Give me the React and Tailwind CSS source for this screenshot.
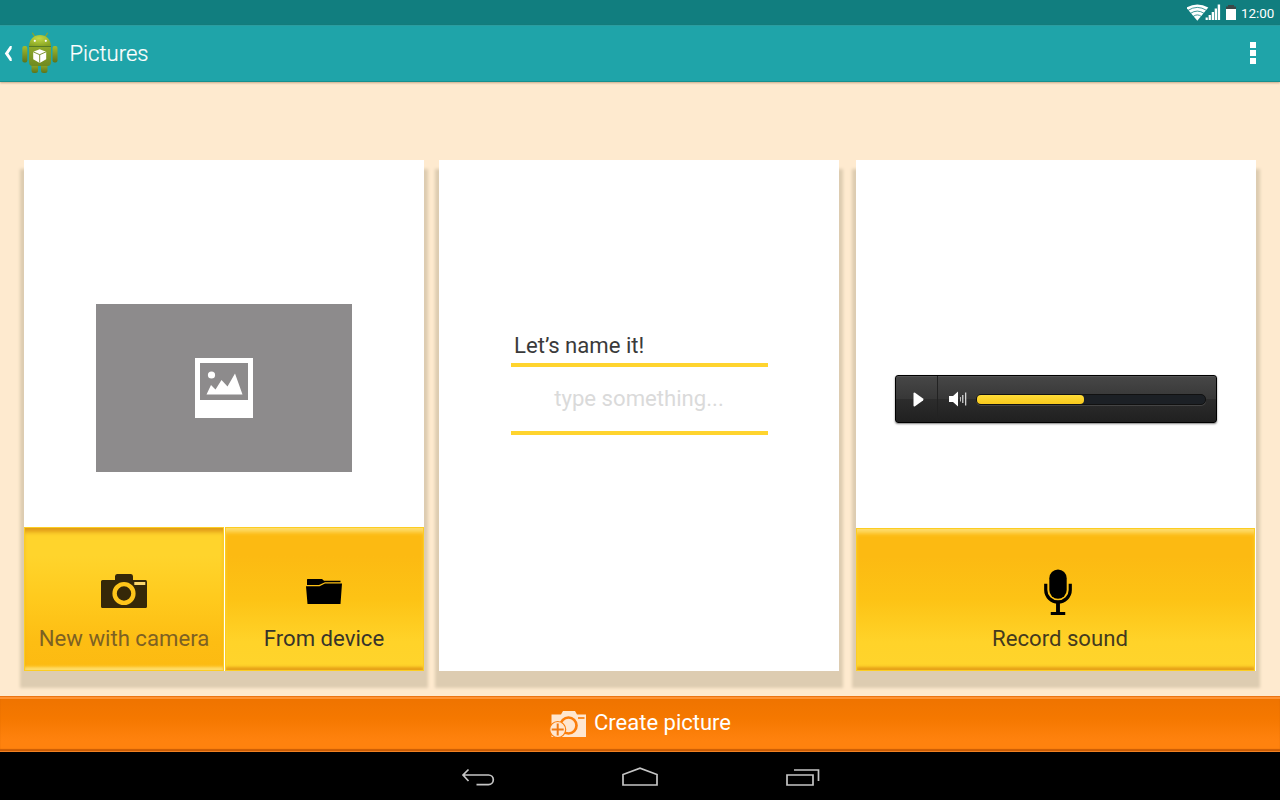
import React from 'react';

function StatusBar() {
  return (
    <div className="flex h-[25px] shrink-0 items-center justify-end bg-[#117e7f] pr-[5px]">
      <svg width="50" height="25" viewBox="0 0 50 25" className="mr-[4px]">
        <path d="M10 20.8 L-1 7.6 Q10 1.400 21 7.600 Z" transform="translate(.3 0)" fill="#fff" />
        <g fill="none" stroke="#117e7f" strokeWidth=".8">
          <path d="M1 10.4 Q10.3 4.400 19.6 10.4" />
          <path d="M3.4 13.4 Q10.3 8.8 17.2 13.4" />
          <path d="M6 16.6 Q10.3 13.2 14.6 16.6" />
        </g>
        <path d="M18.6 17.500h2.200v2.500h-2.200zM21.600 15h2.300V20h-2.300zM24.700 12h2.300v8h-2.300zM27.700 8.500h2.300V20h-2.300zM30.700 4.400h2.400V20h-2.400z" fill="#fff" />
        <path d="M41 5h6v1.500h2V9H39V6.500h2z" fill="#3c4747" />
        <path d="M39 9h10v11H39z" fill="#fff" />
      </svg>
      <span className="mt-[2px] w-[34px] whitespace-nowrap text-[13.400px] leading-[23px] text-white">12:00</span>
    </div>
  );
}

function AndroidIcon() {
  return (
    <svg width="36" height="42" viewBox="0 0 36 42">
      <defs>
        <linearGradient id="limb" x1="0" x2="0" y1="0" y2="1">
          <stop offset="0" stopColor="#a3bd2d" />
          <stop offset="1" stopColor="#5c741a" />
        </linearGradient>
        <linearGradient id="torso" x1="0" x2="0" y1="0" y2="1">
          <stop offset="0" stopColor="#8fa92a" />
          <stop offset="1" stopColor="#6f8a20" />
        </linearGradient>
        <radialGradient id="head" cx=".45" cy=".3" r=".75">
          <stop offset="0" stopColor="#c3d944" />
          <stop offset="1" stopColor="#87a323" />
        </radialGradient>
      </defs>
      <path d="M10.5 1.200l3 4.500M25.500 1.200l-3 4.500" stroke="#8ca62b" strokeWidth="1.200" strokeLinecap="round" />
      <g fill="url(#limb)">
        <rect x=".3" y="14" width="5" height="16.500" rx="2" />
        <rect x="30.500" y="14" width="5" height="16.500" rx="2" />
        <rect x="9.500" y="30" width="6.500" height="11" rx="2.500" />
        <rect x="19" y="30" width="6.500" height="11" rx="2.500" />
      </g>
      <path d="M7 14.500h22V30q0 4-3.500 4h-15Q7 34 7 30z" fill="url(#torso)" />
      <path d="M7 14C7.500 7 11.500 3 18 3s10.500 4 11 11z" fill="url(#head)" />
      <path d="M7 14.500h22" stroke="#556f18" strokeWidth=".8" />
      <circle cx="12.800" cy="8.800" r="1.100" fill="#fff" />
      <circle cx="23.800" cy="8.800" r="1.100" fill="#fff" />
      <path d="M17.700 17.300l6.500 2.400v7.600l-6.500 3.600-6.500-3.600v-7.600z" fill="#fff" />
      <path d="M11.200 19.800l6.500 2.900 6.500-2.900M17.700 22.700v8" fill="none" stroke="#71881e" strokeWidth=".9" />
    </svg>
  );
}

function ActionBar() {
  return (
    <header className="z-10 flex h-[57px] shrink-0 items-center border-b border-[#16908f] bg-[#1fa4a9] shadow-[0_1px_2px_rgba(120,70,30,0.4),inset_0_1px_0_#2b9da0]">
      <svg width="8" height="16" viewBox="0 0 8 16" className="ml-[4px] mt-px">
        <path d="M6 0H7.800L7.600 2.800 4.400 7.500 7.600 12.200 7.800 15H6L.8 7.500z" fill="#fff" />
      </svg>
      <div className="ml-[10px]">
        <AndroidIcon />
      </div>
      <h1 className="ml-[11.500px] text-[22.100px] font-light leading-[56px] text-white [-webkit-text-stroke:0.2px_white]">Pictures</h1>
      <div className="ml-auto mr-[24px] flex flex-col gap-[2px]">
        <i className="size-[6px] bg-white" />
        <i className="size-[6px] bg-white" />
        <i className="size-[6px] bg-white" />
      </div>
    </header>
  );
}

function Card({ className = '', children }) {
  return (
    <section className={`flex h-[511px] w-[400px] flex-col bg-white shadow-[0_13px_3px_4px_#ddccb1] ${className}`}>
      {children}
    </section>
  );
}

const raised =
  'bg-[linear-gradient(#fcba12_0%,#fcba12_20%,#fdc315_50%,#ffd329_80%,#ffd42c_100%)] shadow-[inset_0_0_0_1px_#fccd22,inset_0_6px_4px_-1px_#fedd6c,inset_0_-5px_3px_-1px_#e6a118]';
const pressed =
  'bg-[linear-gradient(#ffd42c_0%,#ffd42c_20%,#ffca1d_50%,#fdbd13_80%,#fcba12_100%)] shadow-[inset_0_0_0_1px_#fccd22,inset_0_6px_4px_-1px_#e09b18,inset_0_-5px_3px_-1px_#fedd6c]';

function TileButton({ className, iconClass, label, labelClass, children }) {
  return (
    <button className={`flex flex-col items-center ${className}`}>
      <span className={`flex h-[50px] shrink-0 items-center justify-center ${iconClass}`}>{children}</span>
      <span className={`whitespace-nowrap text-[22.150px] leading-[30px] ${labelClass}`}>{label}</span>
    </button>
  );
}

function PictureCard() {
  return (
    <Card>
      <div className="ml-[72px] mt-[144px] flex h-[168px] w-[256px] items-center justify-center bg-[#8d8b8c]">
        <svg width="58" height="60" viewBox="0 0 58 60">
          <path fillRule="evenodd" d="M0 0h58v60H0zM5 5v37h48V5z" fill="#fff" />
          <circle cx="16.500" cy="17" r="3.600" fill="#fff" />
          <path d="M11.500 36.500L16 27l4.500 4.500 6-9.500 6 6.500 7.500-13 7.500 21z" fill="#fff" />
        </svg>
      </div>
      <div className="mt-auto flex h-[144px] gap-px">
        <TileButton className={`w-[200px] ${pressed}`} iconClass="mt-[39px]" label="New with camera" labelClass="mt-[7px] text-[#7d6123]">
          <svg width="46" height="34" viewBox="0 0 46 34">
            <path d="M1.500 6H14V2.500Q14 0 16 0h14q2 0 2 2.500V6h12.500Q46 6 46 8v24.500q0 1.500-1.500 1.500h-43Q0 34 0 32.500v-25Q0 6 1.500 6z" fill="#352808" />
            <circle cx="23" cy="19.500" r="9.400" fill="#352808" stroke="#fec51a" strokeWidth="4.400" />
            <path d="M33.300 8h11v3h-11z" fill="#fbd76c" />
          </svg>
        </TileButton>
        <TileButton className={`w-[199px] ${raised}`} iconClass="mt-[39px] pr-px" label="From device" labelClass="mt-[7px] pr-px text-[#38342a]">
          <svg width="36" height="25" viewBox="0 0 36 25">
            <path d="M1 .2Q1 0 2 0h14l2 1.700h16.500v1.500H19L13 6H1z" />
            <path d="M0 7.300h13.500L19 4.500h17L34.500 25h-33z" />
          </svg>
        </TileButton>
      </div>
    </Card>
  );
}

function NameCard() {
  return (
    <Card className="ml-[15px]">
      <div className="ml-[72px] mt-[168px] flex w-[257px] flex-col">
        <label className="pl-[3px] text-[22.150px] leading-[35px] text-[#3a3a3a]">Let’s name it!</label>
        <div className="flex h-[72px] items-center justify-center border-y-4 border-[#ffd42e] text-[22.150px] text-[#dadada]">
          <span className="pr-px">type something...</span>
        </div>
      </div>
    </Card>
  );
}

function AudioPlayer() {
  return (
    <div className="ml-[39px] mt-[215px] flex h-[48px] w-[322px] items-center rounded-[3px] border border-black bg-[linear-gradient(#474747,#373737_50%,#2c2c2c_51%,#202020)] shadow-[0_1px_2px_rgba(0,0,0,0.5),inset_0_1px_0_#555]">
      <div className="flex h-full w-[42px] items-center justify-center border-r border-[#222] pl-[3px]">
        <svg width="11" height="15" viewBox="0 0 11 15">
          <path d="M.5 1Q1 .2 2 .8L10 6.500q1 1 0 2L2 14.200Q.5 14.800.5 13.500z" fill="#fff" />
        </svg>
      </div>
      <svg width="18" height="16" viewBox="0 0 18 16" className="ml-[11px]">
        <path d="M0 5h4l5-4.500v15L4 11H0z" fill="#fff" />
        <path d="M11.500 6v4.500" stroke="#bbb" strokeWidth="1" />
        <path d="M13.800 4v8M16.700 1.500v13" stroke="#eee" strokeWidth="1.100" />
      </svg>
      <div className="ml-[9px] mt-px h-[11px] w-[230px] rounded-[5px] border border-[#111] bg-[#1c2025] shadow-[0_1px_0_#444]">
        <div className="h-[9px] w-[107px] rounded-[4px] bg-[linear-gradient(#ffdc38,#f8c91c)]" />
      </div>
    </div>
  );
}

function SoundCard() {
  return (
    <Card className="ml-[17px]">
      <AudioPlayer />
      <TileButton className={`mt-auto h-[143px] w-[399px] ${raised}`} iconClass="mt-[39px]" label="Record sound" labelClass="mt-[6px] pl-[9px] text-[#443a1e]">
        <svg width="28" height="46" viewBox="0 0 29 47" preserveAspectRatio="none" className="ml-[5px]">
          <rect x="5.500" y=".5" width="18" height="30" rx="9" />
          <path d="M1.800 15v6.500a12.700 12.200 0 0 0 25.400 0V15" fill="none" stroke="#000" strokeWidth="3.300" />
          <path d="M12.500 34h4v10h5.500v3H7v-3h5.500z" />
        </svg>
      </TileButton>
    </Card>
  );
}

function CreateBar() {
  return (
    <button className="z-10 flex h-[56px] shrink-0 items-center bg-[linear-gradient(#ee7300,#f57800_40%,#ff820e_80%)] pl-[549px] shadow-[inset_0_1px_0_#ec7513,inset_0_3px_0_#ff9436,inset_0_-1px_0_#f08022,inset_0_-3px_1px_#cb5d05]">
      <svg width="38" height="28" viewBox="0 0 38 28">
        <path d="M2.500 4.500H12L14 1h12l2 3.500h9V27H2.500z" fill="#ffe7d0" />
        <path d="M29 8h6.500" stroke="#fb7e0b" strokeWidth="1.700" />
        <circle cx="19.500" cy="15.500" r="8" fill="none" stroke="#fb7e0b" strokeWidth="2.700" />
        <circle cx="8.700" cy="19.500" r="8" fill="#ffe7d0" stroke="#fb7e0b" strokeWidth="1.200" />
        <path d="M8.700 13.500v12M2.700 19.500h12" stroke="#f07b14" strokeWidth="2" />
      </svg>
      <span className="ml-[7px] pb-[4px] text-[22px] text-white">Create picture</span>
    </button>
  );
}

function NavBar() {
  return (
    <nav className="flex h-[48px] shrink-0 items-center bg-black pl-[461px] pt-px">
      <svg width="34" height="20" viewBox="0 0 34 20" fill="none" stroke="#c5c5c5" strokeWidth="1.700">
        <path d="M7.500 2.500L2 8l5.500 6M2 8h25.500a4.800 4.800 0 0 1 0 9.600H15.500" />
      </svg>
      <svg width="38" height="20" viewBox="0 0 38 20" fill="none" stroke="#c5c5c5" strokeWidth="1.700" className="ml-[126px]">
        <path d="M2 18V7.500L19 1.200l17 6.300V18z" />
      </svg>
      <svg width="36" height="20" viewBox="0 0 36 20" fill="none" stroke="#c5c5c5" strokeWidth="1.700" className="ml-[126px]">
        <path d="M2 8h26v10H2zM9 3h24.500v11" />
      </svg>
    </nav>
  );
}

export default function App() {
  return (
    <div className="flex h-[800px] w-[1280px] flex-col overflow-hidden bg-[#feeacf] font-['Roboto',sans-serif]">
      <StatusBar />
      <ActionBar />
      <main className="flex flex-1 pl-[24px] pt-[78px]">
        <PictureCard />
        <NameCard />
        <SoundCard />
      </main>
      <CreateBar />
      <NavBar />
    </div>
  );
}
